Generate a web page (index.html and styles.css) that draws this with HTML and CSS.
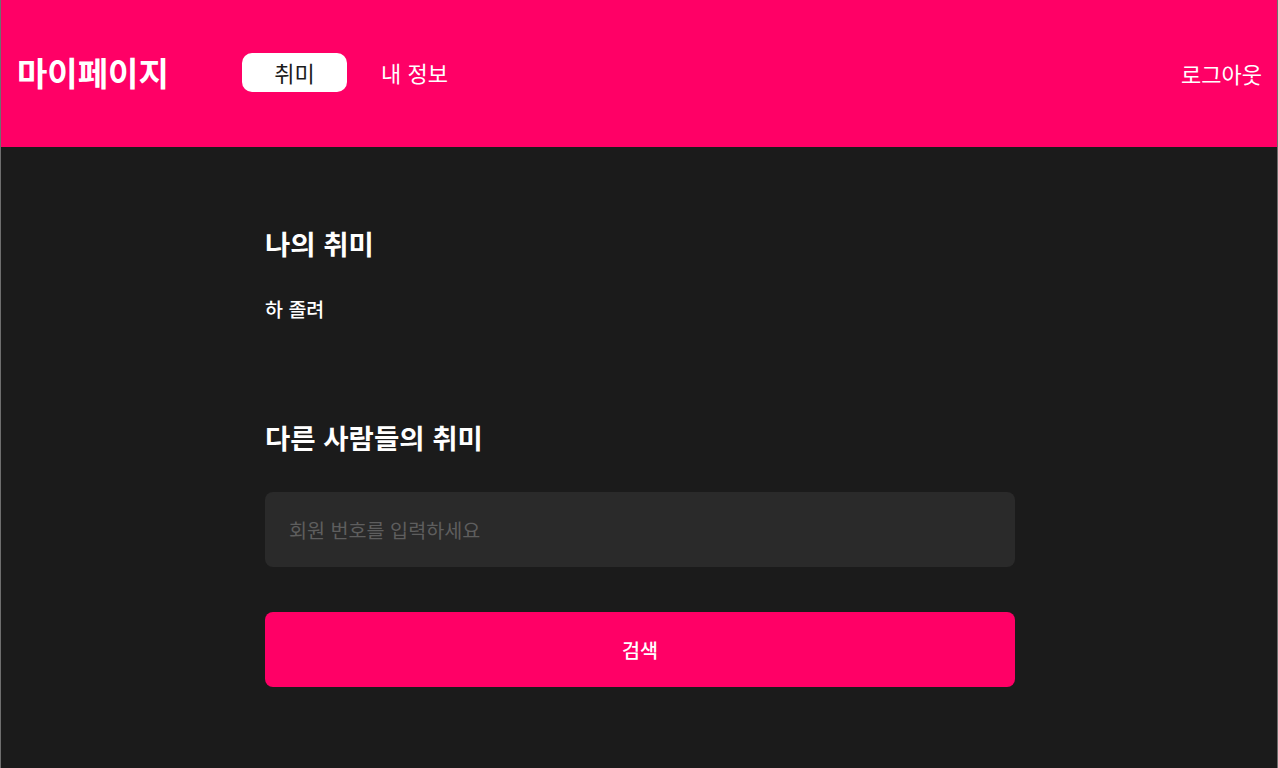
FILE: index.html
```html
<!DOCTYPE html>
<html lang="ko">
<head>
<meta charset="utf-8">
<title>마이페이지</title>
<link rel="stylesheet" href="styles.css">
</head>
<body>
<div class="frame">
  <header class="topbar">
    <h1 class="logo">마이페이지</h1>
    <nav class="tabs">
      <a class="tab active" href="#">취미</a>
      <a class="tab" href="#">내 정보</a>
    </nav>
    <a class="logout" href="#">로그아웃</a>
  </header>
  <main class="main">
    <div class="content">
      <section class="block mine">
        <h2 class="heading">나의 취미</h2>
        <p class="hobby">하 졸려</p>
      </section>
      <section class="block others">
        <h2 class="heading">다른 사람들의 취미</h2>
        <input class="field" type="text" placeholder="회원 번호를 입력하세요">
        <button class="search" type="button">검색</button>
      </section>
    </div>
  </main>
</div>
</body>
</html>
```
FILE: styles.css
```css
* { box-sizing: border-box; }
html, body {
  margin: 0;
  padding: 0;
  background: #1b1b1b;
}
body {
  font-family: "Noto Sans CJK KR", "Noto Sans", sans-serif;
  color: #ffffff;
}
.frame {
  min-height: 768px;
  border-left: 1px solid #6e6e6e;
  border-right: 1px solid #6e6e6e;
  background: #1b1b1b;
}
.topbar {
  height: 147px;
  background: #ff0066;
  display: flex;
  align-items: center;
  padding: 0 15px 2px 16px;
}
.logo {
  margin: 0;
  font-size: 33px;
  font-weight: 700;
  letter-spacing: 0;
  line-height: 1;
  width: 225px;
}
.tabs {
  display: flex;
  align-items: center;
  gap: 34px;
}
.tab {
  color: #ffffff;
  text-decoration: none;
  font-size: 22px;
  line-height: 39px;
}
.tab.active {
  background: #ffffff;
  color: #1b1b1b;
  border-radius: 10px;
  width: 105px;
  text-align: center;
}
.logout {
  margin-left: auto;
  color: #ffffff;
  text-decoration: none;
  font-size: 22px;
}
.main {
  padding-left: 2px;
}
.content {
  width: 750px;
  margin: 0 auto;
  padding-top: 78px;
}
.heading {
  margin: 0;
  font-size: 27.5px;
  font-weight: 700;
  letter-spacing: 0;
  line-height: 36px;
}
.hobby {
  margin: 35px 0 0;
  font-size: 19.5px;
  font-weight: 500;
  line-height: 26px;
}
.others {
  margin-top: 97px;
}
.field {
  display: block;
  width: 100%;
  height: 75px;
  margin-top: 37px;
  background: #2a2a2a;
  border: none;
  border-radius: 8px;
  padding: 0 24px;
  font-family: inherit;
  font-size: 19.6px;
  color: #ffffff;
  outline: none;
}
.field::placeholder {
  color: #5e5e5e;
}
.search {
  display: block;
  width: 100%;
  height: 75px;
  margin-top: 45px;
  background: #ff0066;
  border: none;
  border-radius: 8px;
  color: #ffffff;
  font-family: inherit;
  font-size: 19.6px;
  font-weight: 500;
}
```
